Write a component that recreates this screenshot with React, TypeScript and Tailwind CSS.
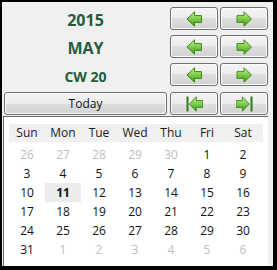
import React from "react";

type Dir = "left" | "right" | "first" | "last";

function Arrow({ dir, id }: { dir: Dir; id: string }) {
  const left = dir === "left" || dir === "first";
  const path = left
    ? "M1 8 L8.5 0.8 V4.6 H15.5 V11.4 H8.5 V15.2 Z"
    : "M15.5 8 L8 0.8 V4.6 H1 V11.4 H8 V15.2 Z";
  let transform = "";
  if (dir === "first") transform = "translate(2.5 0) scale(0.92 1)";
  if (dir === "last") transform = "translate(-1 0) scale(0.92 1)";
  return (
    <svg width="17" height="16" viewBox="0 0 17 16" className="block">
      <defs>
        <linearGradient id={id} x1="0" y1="0" x2="0" y2="1">
          <stop offset="0%" stopColor="#d2f4a8" />
          <stop offset="45%" stopColor="#84cf4e" />
          <stop offset="100%" stopColor="#3c9a1a" />
        </linearGradient>
      </defs>
      <g transform={transform}>
        <path d={path} fill={`url(#${id})`} stroke="#3a8a1a" strokeWidth="1" strokeLinejoin="miter" />
      </g>
      {dir === "first" && <rect x="0.5" y="0.5" width="2" height="15" fill="#2f7d12" />}
      {dir === "last" && <rect x="14.5" y="0.5" width="2" height="15" fill="#2f7d12" />}
    </svg>
  );
}

const btn =
  "h-[23px] rounded-[3px] border border-[#707070] bg-[linear-gradient(to_bottom,#f4f4f4_0%,#ececec_50%,#dedede_50%,#d2d2d2_100%)] shadow-[inset_0_0_0_1px_#fbfbfb] flex items-center justify-center";

function Row({ label, size, l, r, ids }: { label: React.ReactNode; size?: string; l: Dir; r: Dir; ids: [string, string] }) {
  return (
    <div className="flex h-[23px] items-center">
      <div className={`w-[163px] flex items-center justify-center pt-[3px] font-bold text-[#1f5d3c] ${size ?? "text-[16px]"}`}>{label}</div>
      <div className={`${btn} ml-[3px] w-[48px]`}>
        <Arrow dir={l} id={ids[0]} />
      </div>
      <div className={`${btn} ml-[2px] w-[48px]`}>
        <Arrow dir={r} id={ids[1]} />
      </div>
    </div>
  );
}

const days = ["Sun", "Mon", "Tue", "Wed", "Thu", "Fri", "Sat"];
const weeks: [number, boolean][][] = [
  [[26, true], [27, true], [28, true], [29, true], [30, true], [1, false], [2, false]],
  [[3, false], [4, false], [5, false], [6, false], [7, false], [8, false], [9, false]],
  [[10, false], [11, false], [12, false], [13, false], [14, false], [15, false], [16, false]],
  [[17, false], [18, false], [19, false], [20, false], [21, false], [22, false], [23, false]],
  [[24, false], [25, false], [26, false], [27, false], [28, false], [29, false], [30, false]],
  [[31, false], [1, true], [2, true], [3, true], [4, true], [5, true], [6, true]],
];

export default function App() {
  return (
    <div
      className="w-[277px] h-[270px] bg-black pl-[2px] pt-[2px] pr-[4px] pb-[4px]"
      style={{ fontFamily: '"Open Sans", "Noto Sans", sans-serif' }}
    >
      <div className="w-[271px] h-[264px] bg-[#f0f0f0] flex flex-col">
        <div className="h-[114px] pl-[2px] pt-[5px] flex flex-col">
          <Row label="2015" l="left" r="right" ids={["g1", "g2"]} />
          <div className="h-[5px]" />
          <Row label="MAY" l="left" r="right" ids={["g3", "g4"]} />
          <div className="h-[5px]" />
          <Row label="CW 20" size="text-[14px]" l="left" r="right" ids={["g5", "g6"]} />
          <div className="h-[6px]" />
          <div className="flex h-[23px]">
            <div className={`${btn} w-[163px] text-[12px] text-[#111]`}>Today</div>
            <div className={`${btn} ml-[3px] w-[48px]`}>
              <Arrow dir="first" id="g7" />
            </div>
            <div className={`${btn} ml-[2px] w-[48px]`}>
              <Arrow dir="last" id="g8" />
            </div>
          </div>
        </div>
        <div className="ml-[1px] w-[265px] flex-1 border-l border-t border-[#6b6b6b] bg-white pl-[5px] pt-[7px]">
          <div className="w-[254px] h-[18px] bg-[#f0f0f0] grid grid-cols-[repeat(7,36px)] items-center text-[12px] text-[#1a1a1a]">
            {days.map((d) => (
              <div key={d} className="text-center leading-[18px]">{d}</div>
            ))}
          </div>
          <div className="mt-[3px] grid grid-cols-[repeat(7,36px)] text-[12px]">
            {weeks.flat().map(([n, gray], i) => {
              const today = n === 11 && !gray;
              return (
                <div
                  key={i}
                  className={`h-[19px] leading-[19px] text-center ${gray ? "text-[#bdbdbd]" : "text-[#111]"} ${today ? "bg-[#ececec] font-bold" : ""}`}
                >
                  {n}
                </div>
              );
            })}
          </div>
        </div>
      </div>
    </div>
  );
}
